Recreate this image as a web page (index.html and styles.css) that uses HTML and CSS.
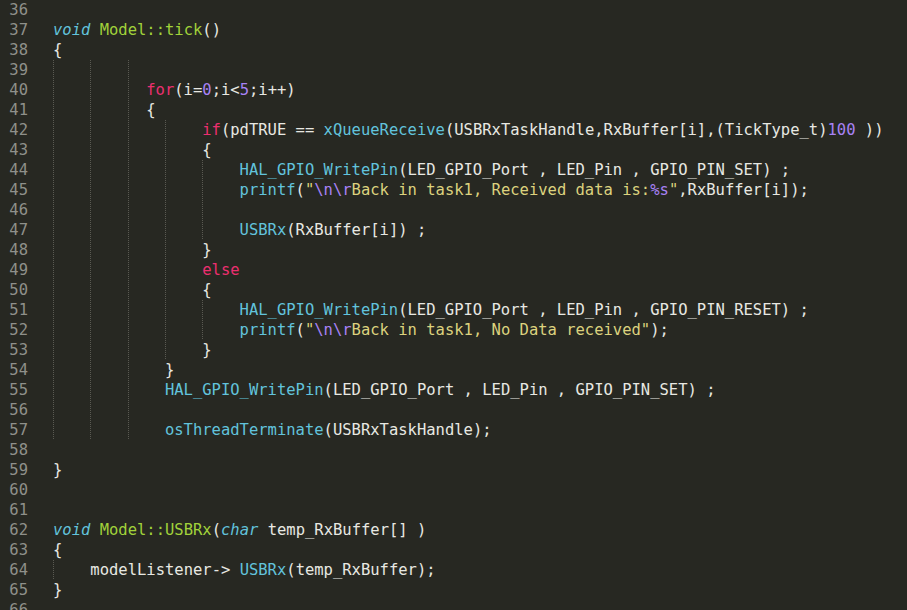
FILE: index.html
```html
<!DOCTYPE html>
<html>
<head>
<meta charset="utf-8">
<link rel="stylesheet" href="styles.css">
</head>
<body>
<div class="editor">
<div class="row"><span class="num">36</span><span class="code"></span></div>
<div class="row"><span class="num">37</span><span class="code"><span class="st">void</span> <span class="fn">Model::tick</span>()</span></div>
<div class="row"><span class="num">38</span><span class="code">{</span></div>
<div class="row"><span class="num">39</span><span class="code"><span class="g"></span><span class="g"></span><span class="g"></span></span></div>
<div class="row"><span class="num">40</span><span class="code"><span class="g"></span><span class="g"></span><span class="g h"></span><span class="kw">for</span>(i=<span class="n">0</span>;i&lt;<span class="n">5</span>;i++)</span></div>
<div class="row"><span class="num">41</span><span class="code"><span class="g"></span><span class="g"></span><span class="g h"></span>{</span></div>
<div class="row"><span class="num">42</span><span class="code"><span class="g"></span><span class="g"></span><span class="g"></span><span class="g"></span><span class="kw">if</span>(pdTRUE == <span class="c">xQueueReceive</span>(USBRxTaskHandle,RxBuffer[i],(TickType_t)<span class="n">100</span> ))</span></div>
<div class="row"><span class="num">43</span><span class="code"><span class="g"></span><span class="g"></span><span class="g"></span><span class="g"></span>{</span></div>
<div class="row"><span class="num">44</span><span class="code"><span class="g"></span><span class="g"></span><span class="g"></span><span class="g"></span><span class="g"></span><span class="c">HAL_GPIO_WritePin</span>(LED_GPIO_Port , LED_Pin , GPIO_PIN_SET) ;</span></div>
<div class="row"><span class="num">45</span><span class="code"><span class="g"></span><span class="g"></span><span class="g"></span><span class="g"></span><span class="g"></span><span class="c">printf</span>(<span class="s">"<span class="n">\n\r</span>Back in task1, Received data is:<span class="n">%s</span>"</span>,RxBuffer[i]);</span></div>
<div class="row"><span class="num">46</span><span class="code"><span class="g"></span><span class="g"></span><span class="g"></span><span class="g"></span><span class="g"></span></span></div>
<div class="row"><span class="num">47</span><span class="code"><span class="g"></span><span class="g"></span><span class="g"></span><span class="g"></span><span class="g"></span><span class="c">USBRx</span>(RxBuffer[i]) ;</span></div>
<div class="row"><span class="num">48</span><span class="code"><span class="g"></span><span class="g"></span><span class="g"></span><span class="g"></span>}</span></div>
<div class="row"><span class="num">49</span><span class="code"><span class="g"></span><span class="g"></span><span class="g"></span><span class="g"></span><span class="kw">else</span></span></div>
<div class="row"><span class="num">50</span><span class="code"><span class="g"></span><span class="g"></span><span class="g"></span><span class="g"></span>{</span></div>
<div class="row"><span class="num">51</span><span class="code"><span class="g"></span><span class="g"></span><span class="g"></span><span class="g"></span><span class="g"></span><span class="c">HAL_GPIO_WritePin</span>(LED_GPIO_Port , LED_Pin , GPIO_PIN_RESET) ;</span></div>
<div class="row"><span class="num">52</span><span class="code"><span class="g"></span><span class="g"></span><span class="g"></span><span class="g"></span><span class="g"></span><span class="c">printf</span>(<span class="s">"<span class="n">\n\r</span>Back in task1, No Data received"</span>);</span></div>
<div class="row"><span class="num">53</span><span class="code"><span class="g"></span><span class="g"></span><span class="g"></span><span class="g"></span>}</span></div>
<div class="row"><span class="num">54</span><span class="code"><span class="g"></span><span class="g"></span><span class="g"></span>}</span></div>
<div class="row"><span class="num">55</span><span class="code"><span class="g"></span><span class="g"></span><span class="g"></span><span class="c">HAL_GPIO_WritePin</span>(LED_GPIO_Port , LED_Pin , GPIO_PIN_SET) ;</span></div>
<div class="row"><span class="num">56</span><span class="code"><span class="g"></span><span class="g"></span><span class="g"></span></span></div>
<div class="row"><span class="num">57</span><span class="code"><span class="g"></span><span class="g"></span><span class="g"></span><span class="c">osThreadTerminate</span>(USBRxTaskHandle);</span></div>
<div class="row"><span class="num">58</span><span class="code"></span></div>
<div class="row"><span class="num">59</span><span class="code">}</span></div>
<div class="row"><span class="num">60</span><span class="code"></span></div>
<div class="row"><span class="num">61</span><span class="code"></span></div>
<div class="row"><span class="num">62</span><span class="code"><span class="st">void</span> <span class="fn">Model::USBRx</span>(<span class="st">char</span> temp_RxBuffer[] )</span></div>
<div class="row"><span class="num">63</span><span class="code">{</span></div>
<div class="row"><span class="num">64</span><span class="code"><span class="g"></span>modelListener-&gt; <span class="c">USBRx</span>(temp_RxBuffer);</span></div>
<div class="row"><span class="num">65</span><span class="code">}</span></div>
<div class="row"><span class="num">66</span><span class="code"></span></div>
</div>
</body>
</html>
```

FILE: styles.css
```css
html, body {
  margin: 0;
  padding: 0;
  background: #272822;
  overflow: hidden;
}

.editor {
  font-family: "DejaVu Sans Mono", "Liberation Mono", monospace;
  font-size: 15.5px;
  color: #e8e8e2;
  height: 610px;
  overflow: hidden;
}

.row {
  display: flex;
  height: 20px;
  line-height: 20px;
  white-space: pre;
}

.num {
  width: 28px;
  flex: none;
  text-align: right;
  color: #8f908a;
}

.code {
  display: block;
  margin-left: 25px;
  height: 20px;
}

.g {
  display: inline-block;
  vertical-align: top;
  width: 4ch;
  height: 20px;
  background-image: repeating-linear-gradient(to bottom, #5a5a52 0, #5a5a52 1px, transparent 1px, transparent 2px);
  background-size: 1px 100%;
  background-repeat: no-repeat;
  background-position: left top;
}

.g.h {
  width: 2ch;
}

.st {
  color: #62c3dc;
  font-style: italic;
}

.fn {
  color: #a1d23a;
}

.kw {
  color: #ec2f6f;
}

.c {
  color: #62c3dc;
}

.n {
  color: #a782f5;
}

.s {
  color: #dcd27e;
}
```
